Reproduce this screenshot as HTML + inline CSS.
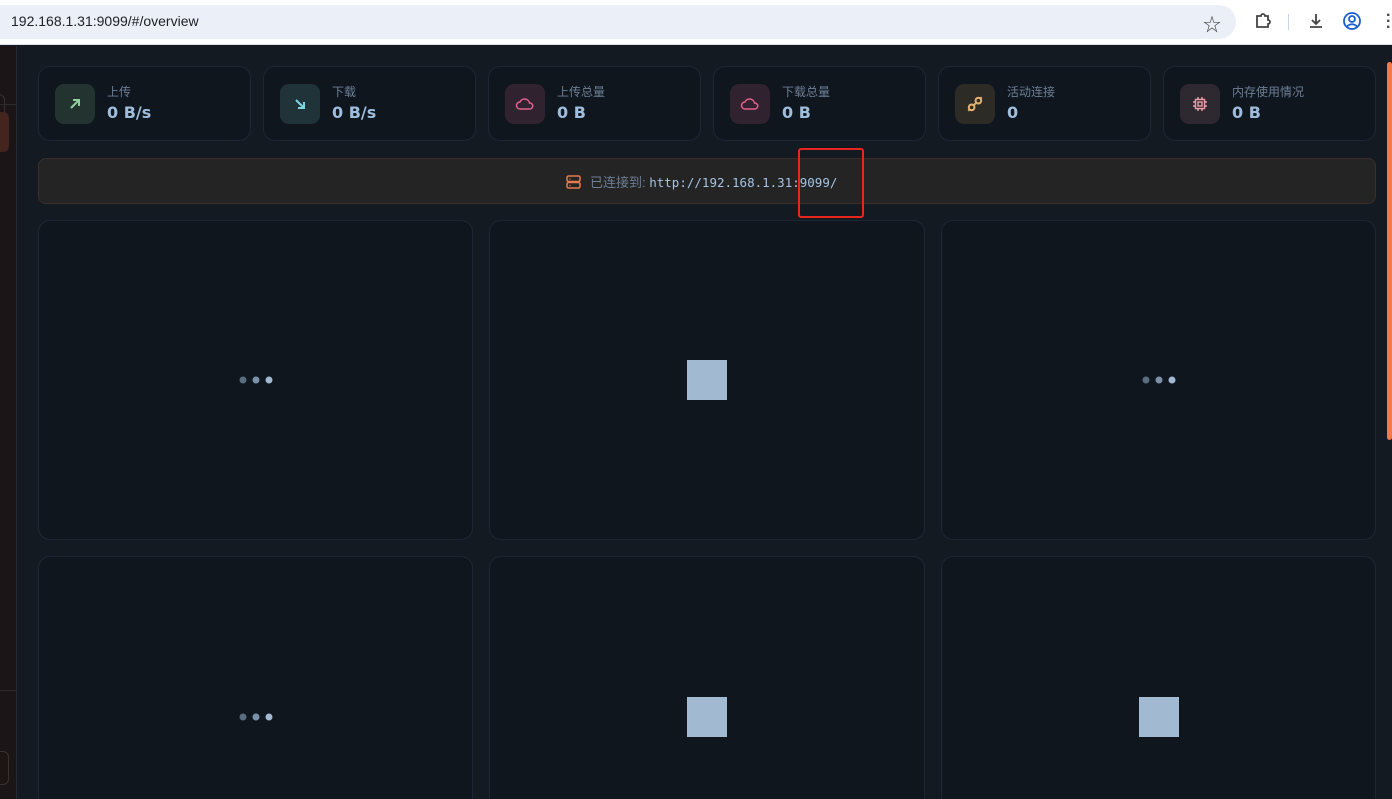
<!DOCTYPE html><html><head><meta charset="utf-8"><style>
*{box-sizing:border-box;margin:0;padding:0}
html{width:1392px;height:799px;overflow:hidden;background:#131a22}
body{width:1392px;height:799px;overflow:hidden;background:#131a22;font-family:"Liberation Sans","Noto Sans CJK SC",sans-serif;position:relative}
.top{position:absolute;left:0;top:0;width:1392px;height:45px;background:#fff;border-bottom:1px solid #dde1e8}
.addr{position:absolute;left:-20px;top:5px;width:1256px;height:34px;background:#ebf0f8;border-radius:17px}
.url{position:absolute;left:11px;top:13px;font-size:14px;color:#202124}
.side{position:absolute;left:0;top:46px;width:17px;height:753px;background:#1b1517;border-right:1px solid #262a30}
.card{position:absolute;background:#0f161e;border:1px solid #1c2733;border-radius:12px}
.ic{position:absolute;left:16px;top:17px;width:40px;height:40px;border-radius:9px;display:flex;align-items:center;justify-content:center}
.lb{position:absolute;left:68px;top:16px;font-size:12px;color:#6d7f95}
.vl{position:absolute;left:68px;top:36px;font-size:16px;font-weight:bold;color:#9fbddc;font-family:"DejaVu Sans","Liberation Sans",sans-serif}
.dots{position:absolute;left:50%;top:50%;transform:translate(-50%,-50%);display:flex;gap:6px}
.dots i{width:7px;height:7px;border-radius:50%;display:block}
.sq{position:absolute;left:50%;top:50%;width:40px;height:40px;margin:-20px 0 0 -20px;background:#a1b9d1}
</style></head><body>
<div class="top"><div class="addr"></div><div class="url">192.168.1.31:9099/#/overview</div>
<div style="position:absolute;left:1203px;top:11px;font-size:18px;color:#444">☆</div>
<svg style="position:absolute;left:1254px;top:12px" width="18" height="18" viewBox="0 0 18 18" fill="none" stroke="#444" stroke-width="1.8"><path d="M3 4h4a2 2 0 014 0h3v4a2 2 0 010 4v3H3z"/></svg>
<div style="position:absolute;left:1288px;top:14px;width:1px;height:16px;background:#c9d4e6"></div>
<svg style="position:absolute;left:1307px;top:12px" width="18" height="18" viewBox="0 0 18 18" fill="none" stroke="#444" stroke-width="1.8"><path d="M9 2v10M5 8l4 4 4-4M3 15h12"/></svg>
<svg style="position:absolute;left:1342px;top:11px" width="20" height="20" viewBox="0 0 20 20" fill="none" stroke="#1a5fd0" stroke-width="1.8"><circle cx="10" cy="10" r="8"/><circle cx="10" cy="8" r="3"/><path d="M5 15.5c3-3 7-3 10 0"/></svg>
<div style="position:absolute;left:1386px;top:13px;font-size:16px;color:#444;line-height:6px;font-weight:bold">·<br>·<br>·</div>
</div>
<div class="side"><div style="position:absolute;left:-10px;top:48px;width:15px;height:38px;border:1px solid #3a3030;border-radius:6px"></div><div style="position:absolute;left:0;top:58px;width:17px;height:1px;background:#2d2a2c"></div><div style="position:absolute;left:-10px;top:66px;width:19px;height:40px;background:#43241f;border-radius:6px"></div><div style="position:absolute;left:0;top:644px;width:17px;height:1px;background:#2d2a2c"></div><div style="position:absolute;left:-10px;top:705px;width:19px;height:34px;border:1px solid #3a3030;background:#1d1414;border-radius:6px"></div></div>
<div style="position:absolute;left:1387px;top:62px;width:5px;height:378px;background:#f07a4a;border-radius:3px"></div>

<div class="card" style="left:38px;top:66px;width:213px;height:75px"><div class="ic" style="background:#233330"><svg width="14" height="14" viewBox="0 0 14 14" fill="none" stroke="#8fd19a" stroke-width="2"><path d="M3 11L11 3M5 3h6v6"/></svg></div><div class="lb">上传</div><div class="vl">0 B/s</div></div>
<div class="card" style="left:263px;top:66px;width:213px;height:75px"><div class="ic" style="background:#1f3339"><svg width="14" height="14" viewBox="0 0 14 14" fill="none" stroke="#7fd6e3" stroke-width="2"><path d="M3 3l8 8M11 5v6H5"/></svg></div><div class="lb">下载</div><div class="vl">0 B/s</div></div>
<div class="card" style="left:488px;top:66px;width:213px;height:75px"><div class="ic" style="background:#30222f"><svg width="20" height="14" viewBox="0 0 20 14" fill="none" stroke="#e4618b" stroke-width="1.5"><path d="M5 12a3.5 3.5 0 010-7 5 5 0 019.5 1A3 3 0 0115 12z"/></svg></div><div class="lb">上传总量</div><div class="vl">0 B</div></div>
<div class="card" style="left:713px;top:66px;width:213px;height:75px"><div class="ic" style="background:#30222f"><svg width="20" height="14" viewBox="0 0 20 14" fill="none" stroke="#e4618b" stroke-width="1.5"><path d="M5 12a3.5 3.5 0 010-7 5 5 0 019.5 1A3 3 0 0115 12z"/></svg></div><div class="lb">下载总量</div><div class="vl">0 B</div></div>
<div class="card" style="left:938px;top:66px;width:213px;height:75px"><div class="ic" style="background:#2c2b25"><svg width="18" height="18" viewBox="0 0 16 16" fill="none" stroke="#e0b070" stroke-width="1.8"><circle cx="5" cy="11" r="2.5"/><circle cx="11" cy="5" r="2.5"/><path d="M2 14l1.3-1.3M14 2l-1.3 1.3M7 9l2-2"/></svg></div><div class="lb">活动连接</div><div class="vl">0</div></div>
<div class="card" style="left:1163px;top:66px;width:213px;height:75px"><div class="ic" style="background:#2e2830"><svg width="16" height="16" viewBox="0 0 16 16" fill="none" stroke="#f0a0a8" stroke-width="1.4"><rect x="3.5" y="3.5" width="9" height="9"/><rect x="6" y="6" width="4" height="4"/><path d="M6 1v2M10 1v2M6 13v2M10 13v2M1 6h2M1 10h2M13 6h2M13 10h2"/></svg></div><div class="lb">内存使用情况</div><div class="vl">0 B</div></div>

<div class="card" style="left:38px;top:158px;width:1338px;height:46px;background:#242424;border-color:#3c2e2a;border-radius:8px">
<div style="position:absolute;left:527px;top:13px;display:flex;align-items:center;gap:9px;font-size:13px;color:#6d7f95"><svg width="15" height="14" viewBox="0 0 15 14" fill="none" stroke="#e67a4f" stroke-width="1.5"><rect x="1" y="1" width="13" height="5.5" rx="1.5"/><rect x="1" y="7.5" width="13" height="5.5" rx="1.5"/><path d="M3.5 4h1M3.5 10.5h1"/></svg><span>已连接到: <span style="font-family:'DejaVu Sans Mono','Liberation Mono',monospace;font-size:12.5px;color:#a6c3e3">http://192.168.1.31:9099/</span></span></div></div>
<div style="position:absolute;left:798px;top:148px;width:66px;height:70px;border:2px solid #e8251f;border-radius:3px"></div>

<div class="card" style="left:38px;top:220px;width:435px;height:320px"><div class="dots"><i style="background:#5a6c80"></i><i style="background:#7b91a8"></i><i style="background:#a1b9d1"></i></div></div>
<div class="card" style="left:489px;top:220px;width:436px;height:320px"><div class="sq"></div></div>
<div class="card" style="left:941px;top:220px;width:435px;height:320px"><div class="dots"><i style="background:#5a6c80"></i><i style="background:#7b91a8"></i><i style="background:#a1b9d1"></i></div></div>
<div class="card" style="left:38px;top:556px;width:435px;height:260px"><div class="dots" style="top:160px"><i style="background:#5a6c80"></i><i style="background:#7b91a8"></i><i style="background:#a1b9d1"></i></div></div>
<div class="card" style="left:489px;top:556px;width:436px;height:260px"><div class="sq" style="top:160px"></div></div>
<div class="card" style="left:941px;top:556px;width:435px;height:260px"><div class="sq" style="top:160px"></div></div>
</body></html>
